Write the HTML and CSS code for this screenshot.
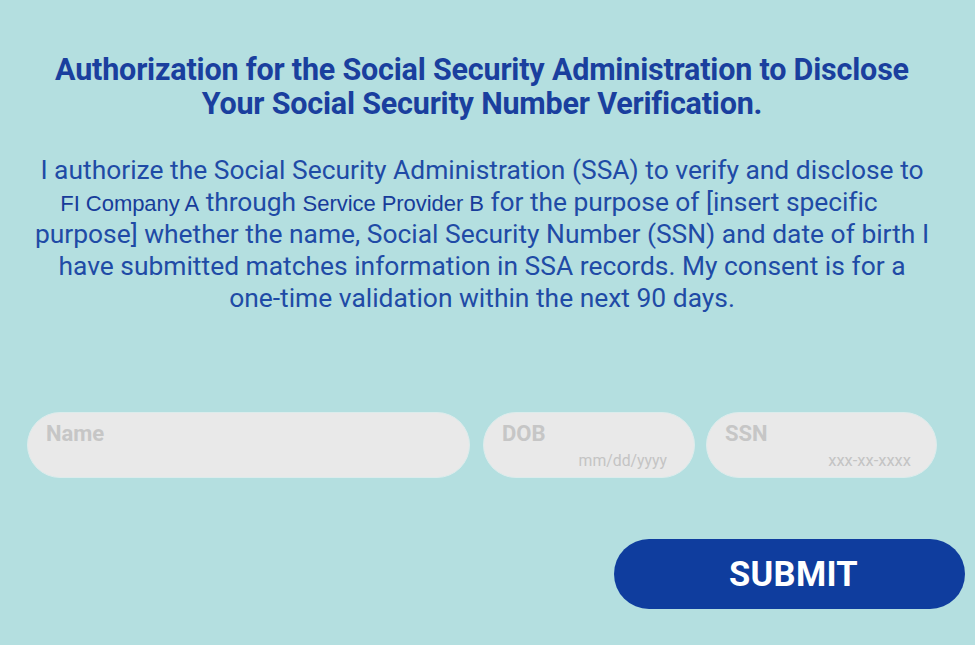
FILE: index.html
```html
<!DOCTYPE html>
<html lang="en">
<head>
<meta charset="utf-8">
<title>SSA Authorization</title>
<link rel="stylesheet" href="styles.css">
</head>
<body>
<main class="page">
  <h1 class="title">Authorization for the Social Security Administration to Disclose<br>Your Social Security Number Verification.</h1>
  <p class="consent">I authorize the Social Security Administration (SSA) to verify and disclose to<br><span class="shifted"><span class="party">FI Company A</span> through <span class="party">Service Provider B</span> for the purpose of [insert specific</span><br>purpose] whether the name, Social Security Number (SSN) and date of birth I<br>have submitted matches information in SSA records. My consent is for a<br>one-time validation within the next 90 days.</p>
  <form class="form">
    <div class="fields">
      <div class="field field-name">
        <span class="label">Name</span>
      </div>
      <div class="field field-dob">
        <span class="label">DOB</span>
        <span class="hint">mm/dd/yyyy</span>
      </div>
      <div class="field field-ssn">
        <span class="label">SSN</span>
        <span class="hint">xxx-xx-xxxx</span>
      </div>
    </div>
    <div class="actions">
      <button type="button" class="submit">SUBMIT</button>
    </div>
  </form>
</main>
</body>
</html>
```
FILE: styles.css
```css
* { box-sizing: border-box; }
html, body {
  margin: 0;
  padding: 0;
  background: #b4dfe0;
  height: 100%;
}
body {
  font-family: Roboto, "Liberation Sans", Arial, sans-serif;
  overflow: hidden;
}
.page {
  width: 910px;
  margin-left: 27px;
  padding-top: 53px;
}
.title {
  margin: 0;
  text-align: center;
  font-size: 30.5px;
  line-height: 34px;
  font-weight: 700;
  color: #1a3f9e;
  letter-spacing: -0.2px;
}
.consent {
  margin: 33px -20px 0;
  text-align: center;
  font-size: 26.4px;
  line-height: 32px;
  font-weight: 400;
  color: #1f4ba6;
}
.shifted {
  padding-right: 26px;
  letter-spacing: -0.05px;
}
.party {
  font-family: "Liberation Sans", Arial, sans-serif;
  font-size: 22px;
  line-height: 1;
  color: #173c9a;
}
.form {
  margin-top: 98px;
}
.fields {
  display: flex;
  gap: 12px;
}
.field {
  position: relative;
  height: 66px;
  border-radius: 33px;
  background: #e9e9e9;
  border: 1px solid #dcecec;
  padding: 8px 18px 0;
  display: flex;
  flex-direction: column;
}
.field-name { width: 443px; }
.field-dob { width: 212px; margin-left: 1px; }
.field-ssn { width: 231px; margin-left: -1px; }
.label {
  font-size: 22px;
  font-weight: 700;
  color: #c6c6c6;
  line-height: 26px;
}
.hint {
  align-self: flex-end;
  margin-top: 4px;
  margin-right: 9px;
  font-size: 15.8px;
  color: #c4c4c4;
  line-height: 20px;
}
.field-ssn .hint { margin-right: 7px; font-size: 16.5px; }
.actions {
  display: flex;
  justify-content: flex-end;
  margin-top: 61px;
  margin-right: -28px;
}
.submit {
  width: 351px;
  height: 70px;
  border: none;
  border-radius: 35px;
  background: #0f3d9e;
  color: #ffffff;
  font-family: Roboto, "Liberation Sans", Arial, sans-serif;
  font-size: 34.5px;
  font-weight: 700;
  letter-spacing: 0.3px;
  padding: 0 0 0 8px;
}
```
